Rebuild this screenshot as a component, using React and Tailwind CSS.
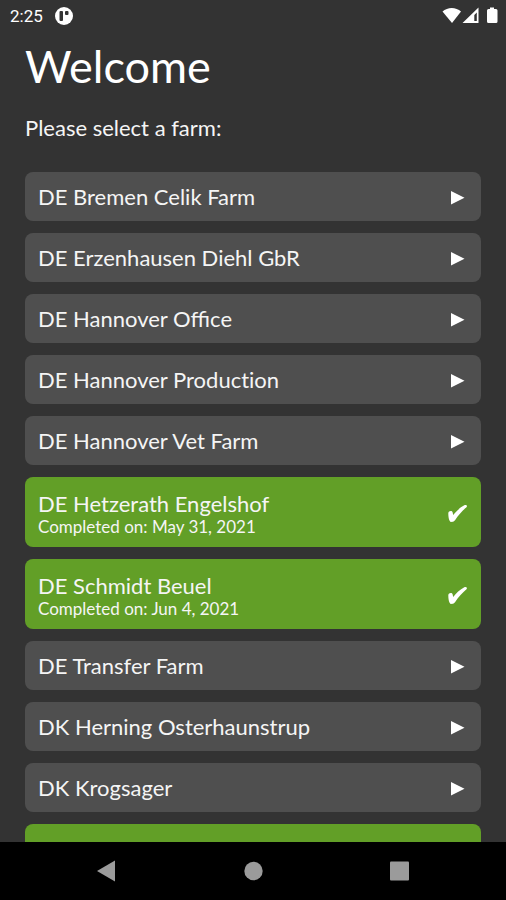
import React from 'react'
import clsx from 'clsx'

const farms = [
  { id: 1, name: 'DE Bremen Celik Farm' },
  { id: 2, name: 'DE Erzenhausen Diehl GbR' },
  { id: 3, name: 'DE Hannover Office' },
  { id: 4, name: 'DE Hannover Production', plainLetters: true },
  { id: 5, name: 'DE Hannover Vet Farm' },
  { id: 6, name: 'DE Hetzerath Engelshof', completed: 'May 31, 2021' },
  { id: 7, name: 'DE Schmidt Beuel', completed: 'Jun 4, 2021' },
  { id: 8, name: 'DE Transfer Farm' },
  { id: 9, name: 'DK Herning Osterhaunstrup' },
  { id: 10, name: 'DK Krogsager' },
]

const StatusBar = () => {
  return (
    <div className="flex h-8 shrink-0 items-center justify-between pl-[10px] pr-2 text-white">
      <div className="flex items-center gap-3">
        <span className="font-['Roboto',sans-serif] text-[17px] leading-5">2:25</span>
        <svg className="h-[18px] w-[18px]" viewBox="0 0 18 18" aria-hidden="true">
          <circle cx="9" cy="9" r="9" fill="#fff" />
          <rect x="4.500" y="4" width="3.500" height="10" rx="1" fill="#333" />
          <rect x="10" y="4" width="3.500" height="4" rx="1" fill="#333" />
        </svg>
      </div>
      <svg className="h-[18px] w-[56px]" viewBox="0 0 56 18" fill="#fff" aria-hidden="true">
        <path d="M0.500 4.500C5.500 -0.200 14 -0.200 19 4.500L10 16Z" />
        <path fillRule="evenodd" d="M36.500 0.500V16H20.500ZM34.800 5.500L32.300 8V14H34.800Z" />
        <path d="M48 0.500H52V2H54Q55.500 2 55.500 3.500V14.500Q55.500 16 54 16H46.500Q45 16 45 14.500V3.500Q45 2 46.500 2H48Z" />
      </svg>
    </div>
  )
}

const FarmRow = ({ farm }) => {
  if (farm.completed) {
    return (
      <button type="button" className="flex h-[70px] w-full items-center justify-between rounded-lg bg-[#629f27] px-[13px] text-left">
        <span className="pt-1">
          <span className="block text-[22px] leading-[26px]">{farm.name}</span>
          <span className="block text-[17px] leading-5">Completed on: {farm.completed}</span>
        </span>
        <svg className="h-6 w-[22px]" viewBox="0 0 22 24" fill="#fff" aria-hidden="true">
          <path d="M2.300 13.200C2.300 11 6 10.300 6.600 12.300L7.200 15C10 11.500 14 7.500 18.300 5.300C20.300 4.400 21.700 5.900 20.500 7.300C16.500 10.500 12.500 15 9.200 20C7.800 22.200 4.600 22.700 3.600 20.800C2.600 18.700 2.300 16 2.300 13.200Z" />
        </svg>
      </button>
    )
  }
  return (
    <button type="button" className="flex h-[49px] w-full items-center justify-between rounded-lg bg-[#4f4f4f] px-[13px] text-left">
      <span className={clsx('text-[22px] leading-[26px]', farm.plainLetters && '[font-variant-ligatures:none]')}>
        {farm.name}
      </span>
      <svg className="h-5 w-[22px]" viewBox="0 0 22 20" fill="#fff" aria-hidden="true">
        <path d="M5 4L18.500 10.800L5 17.500Z" />
      </svg>
    </button>
  )
}

const NavBar = () => {
  return (
    <nav className="flex h-[58px] shrink-0 items-center justify-center gap-[118px] bg-black text-[#9b9b9b]">
      <button type="button" aria-label="Back">
        <svg className="h-7 w-7" viewBox="0 0 28 28" fill="currentColor"><path d="M4 14L22 3.500V24.500Z" /></svg>
      </button>
      <button type="button" aria-label="Home">
        <svg className="h-7 w-7" viewBox="0 0 28 28" fill="currentColor"><circle cx="14.500" cy="14" r="9.200" /></svg>
      </button>
      <button type="button" aria-label="Recent apps">
        <svg className="h-7 w-7" viewBox="0 0 28 28" fill="currentColor"><rect x="5" y="4.500" width="19" height="19" rx="1" /></svg>
      </button>
    </nav>
  )
}

const App = () => {
  return (
    <div className="flex h-screen flex-col overflow-hidden bg-[#333333] font-['Lato',sans-serif] text-[#f5f5f5]">
      <StatusBar />

      <main className="min-h-0 flex-1 overflow-hidden px-[25px]">
        <h1 className="pt-[6px] text-[45px] leading-[56px] text-white">Welcome</h1>
        <p className="pt-[22px] text-[22px] leading-6">Please select a farm:</p>

        {/* Farm list */}
        <ul className="mt-8 space-y-3">
          {farms.map((farm) => (
            <li key={farm.id}>
              <FarmRow farm={farm} />
            </li>
          ))}
          <li className="h-[70px] rounded-lg bg-[#629f27]"></li>
        </ul>
      </main>

      <NavBar />
    </div>
  )
}

export default App
